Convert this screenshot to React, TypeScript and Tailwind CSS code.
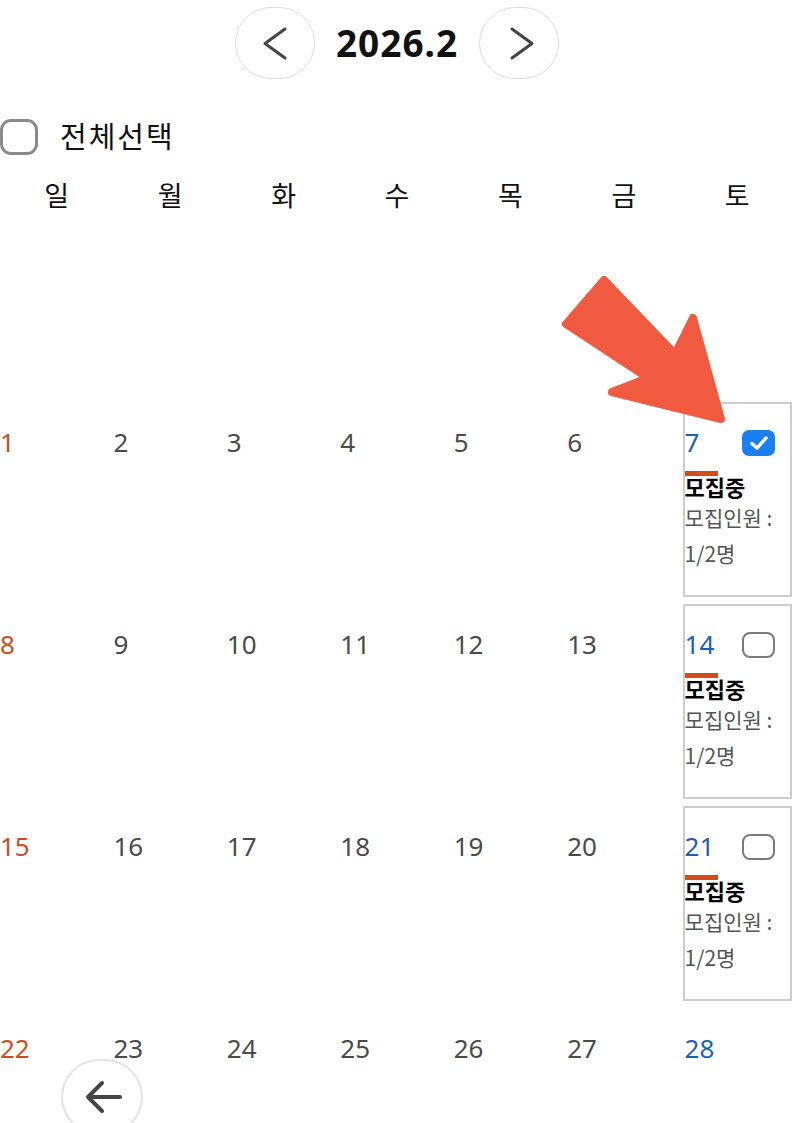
import React from "react";

const FONT = { fontFamily: '"Noto Sans", "Noto Sans CJK KR", sans-serif' };
const CJK = { fontFamily: '"Noto Sans CJK KR", sans-serif' };

type Cell = { day: number | null; card?: boolean; checked?: boolean };

const weeks: Cell[][] = [
  [null, null, null, null, null, null, null].map((d) => ({ day: d })),
  [1, 2, 3, 4, 5, 6, 7].map((d) => ({ day: d, card: d === 7, checked: d === 7 })),
  [8, 9, 10, 11, 12, 13, 14].map((d) => ({ day: d, card: d === 14 })),
  [15, 16, 17, 18, 19, 20, 21].map((d) => ({ day: d, card: d === 21 })),
  [22, 23, 24, 25, 26, 27, 28].map((d) => ({ day: d })),
];

function Checkbox({ checked }: { checked?: boolean }) {
  if (checked) {
    return (
      <div className="w-[33px] h-[26px] rounded-[7px] bg-[#1a7ff0] flex items-center justify-center">
        <svg width="20" height="16" viewBox="0 0 20 16">
          <path d="M3 8.5 L8 13 L17 3" fill="none" stroke="white" strokeWidth="3.4" strokeLinecap="round" strokeLinejoin="round" />
        </svg>
      </div>
    );
  }
  return <div className="w-[33px] h-[26px] rounded-[8px] border-[2.5px] border-[#7a7a7a] bg-white" />;
}

function DayCell({ cell, col }: { cell: Cell; col: number }) {
  const color = col === 0 ? "text-[#cf4b1b]" : col === 6 ? "text-[#1b5fb8]" : "text-[#4a4a4a]";
  const boxCls = cell.card
    ? "ml-[2px] mr-[2px] mt-[2px] border-2 border-[#cdcdcd] pl-0"
    : col === 6
    ? "ml-[2px] mt-[2px] border-2 border-transparent"
    : "ml-0 mt-[2px] border-y-2 border-transparent";
  return (
    <div className="h-full">
      <div className={"h-[195px] pt-[23px] " + boxCls}>
        {cell.day !== null && (
          <div className="flex items-center justify-between h-[31px] pr-[15px]">
            <span className={"text-[26px] leading-[31px] " + color}>{cell.day}</span>
            {cell.card && <Checkbox checked={cell.checked} />}
          </div>
        )}
        {cell.card && (
          <div style={CJK}>
            <div className="mt-[13px] w-[33px] h-[5px] bg-[#d24d1c]" />
            <div className="text-[22px] font-bold leading-[23px] -mt-[1px] text-black">모집중</div>
            <div className="mt-[1px] text-[21px] leading-[36px] text-[#555]">
              모집인원 :
              <br />
              1/2명
            </div>
          </div>
        )}
      </div>
    </div>
  );
}

export default function App() {
  return (
    <div className="relative w-[794px] h-[1123px] overflow-hidden bg-white" style={FONT}>
      {/* header */}
      <div className="flex items-center justify-center pt-[7px] gap-[21px]">
        <div className="w-[80px] h-[72px] rounded-full border-[1.5px] border-[#dcdcdc] bg-white">
          <svg width="80" height="72" viewBox="0 0 80 72">
            <polyline points="49,21 29,35.5 49,50" fill="none" stroke="#444" strokeWidth="3" strokeLinecap="round" strokeLinejoin="round" />
          </svg>
        </div>
        <div className="text-[37px] font-bold text-[#111] tracking-[1px] leading-[72px]">2026.2</div>
        <div className="w-[80px] h-[72px] rounded-full border-[1.5px] border-[#dcdcdc] bg-white">
          <svg width="80" height="72" viewBox="0 0 80 72">
            <polyline points="32,21 52,35.5 32,50" fill="none" stroke="#444" strokeWidth="3" strokeLinecap="round" strokeLinejoin="round" />
          </svg>
        </div>
      </div>

      {/* select all */}
      <div className="mt-[39px] flex items-center gap-[22px] h-[37px]">
        <div className="w-[38px] h-[36px] rounded-[11px] border-[3px] border-[#8a8a8a]" />
        <span className="text-[29px] tracking-[2px] leading-[37px] text-[#111]">전체선택</span>
      </div>

      {/* weekdays */}
      <div className="grid grid-cols-7 mt-[25px] h-[32px]">
        {["일", "월", "화", "수", "목", "금", "토"].map((w) => (
          <div key={w} className="text-center text-[27px] leading-[32px] text-[#111]">
            {w}
          </div>
        ))}
      </div>

      {/* calendar rows */}
      <div className="flex flex-col">
        {weeks.map((week, wi) => (
          <div key={wi} className={"grid grid-cols-7 " + (wi === 0 ? "h-[188px]" : "h-[202px]")}>
            {wi === 0
              ? week.map((_, ci) => <div key={ci} />)
              : week.map((cell, ci) => <DayCell key={ci} cell={cell} col={ci} />)}
          </div>
        ))}
      </div>

      {/* annotation arrow */}
      <svg className="absolute left-0 top-0 pointer-events-none" width="794" height="1123" viewBox="0 0 794 1123">
        <polygon
          points="604,280 675,354 693,318 721,419 612,392 648,378 566,324"
          fill="#ef5a40"
          stroke="#ef5a40"
          strokeWidth="8"
          strokeLinejoin="round"
        />
      </svg>

      {/* back button */}
      <div className="absolute left-[61px] top-[1059px] w-[82px] h-[76px] rounded-full border-2 border-[#e3e3e3] bg-white">
        <svg width="82" height="76" viewBox="0 0 82 76">
          <path d="M57 36 L25 36 M39 22 L25 36 L39 50" fill="none" stroke="#444" strokeWidth="4" strokeLinecap="round" strokeLinejoin="round" />
        </svg>
      </div>
    </div>
  );
}
